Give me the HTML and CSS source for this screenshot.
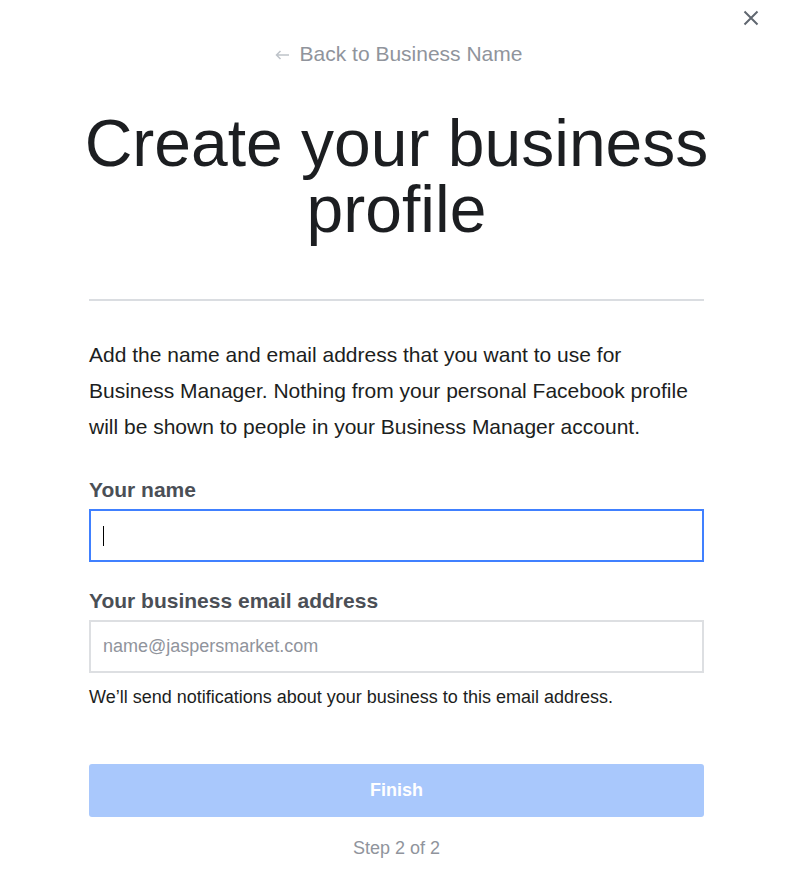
FILE: index.html
```html
<!DOCTYPE html>
<html lang="en">
<head>
  <meta charset="UTF-8">
  <meta name="viewport" content="width=device-width, initial-scale=1.0">
  <title>Create your business profile</title>
  <link rel="stylesheet" href="styles.css">
</head>
<body>
  <button class="close" aria-label="Close">
    <svg width="16" height="16" viewBox="0 0 16 16"><path d="M1.5 1.5 L14.5 14.5 M14.5 1.5 L1.5 14.5" stroke="#606770" stroke-width="2" fill="none"/></svg>
  </button>
  <div class="container">
    <a class="back" href="#">
      <svg class="arrow" width="14" height="10" viewBox="0 0 14 10"><path d="M14 5 H1.5 M5.5 1 L1.5 5 L5.5 9" stroke="#bec3c9" stroke-width="1.5" fill="none"/></svg>
      Back to Business Name
    </a>
    <h1 class="title">Create your business profile</h1>
    <hr class="divider">
    <p class="intro">
      Add the name and email address that you want to use for Business Manager. Nothing from your personal Facebook profile will be shown to people in your Business Manager account.
    </p>
    <label class="label" for="yourName">Your name</label>
    <div class="field focused">
      <span class="caret"></span>
      <input type="text" id="yourName">
    </div>
    <label class="label second" for="email">Your business email address</label>
    <div class="field">
      <input type="email" id="email" placeholder="name@jaspersmarket.com">
    </div>
    <p class="hint">We’ll send notifications about your business to this email address.</p>
    <button class="finish" disabled>Finish</button>
    <p class="step">Step 2 of 2</p>
  </div>
</body>
</html>
```

FILE: styles.css
```css
body {
  margin: 0;
  background: #fff;
  font-family: "Liberation Sans", Arial, sans-serif;
  color: #1c1e21;
}
.close {
  position: absolute;
  top: 10px;
  right: 35px;
  padding: 0;
  border: 0;
  background: none;
  width: 16px;
  height: 16px;
  cursor: pointer;
}
.close svg {
  display: block;
}
.container {
  width: 615px;
  margin: 0 90px 0 89px;
  padding-top: 42px;
  display: flex;
  flex-direction: column;
}
.back {
  align-self: center;
  margin-left: 4px;
  display: flex;
  align-items: center;
  gap: 11px;
  font-size: 21px;
  line-height: 24px;
  color: #90949c;
  text-decoration: none;
}
.back .arrow {
  display: block;
  margin-top: 2px;
}
.title {
  margin: 44px -20px 0;
  font-size: 66px;
  line-height: 66px;
  font-weight: normal;
  text-align: center;
  color: #1c1e21;
}
.divider {
  margin: 57px 0 0;
  border: 0;
  height: 2px;
  background: #dadde1;
}
.intro {
  margin: 36px 0 0;
  font-size: 21px;
  line-height: 36px;
}
.label {
  margin-top: 33px;
  font-size: 21px;
  line-height: 24px;
  font-weight: bold;
  color: #4b4f56;
}
.label.second {
  margin-top: 27px;
}
.field {
  margin-top: 7px;
  height: 53px;
  box-sizing: border-box;
  border: 2px solid #dddfe2;
  padding: 0 12px;
  display: flex;
  align-items: center;
}
.field.focused {
  border-color: #4080ff;
}
.field input {
  flex: 1;
  border: 0;
  outline: none;
  padding: 0;
  font-family: inherit;
  font-size: 18px;
  color: #1c1e21;
  background: transparent;
}
.field input::placeholder {
  color: #90949c;
}
.caret {
  width: 1px;
  height: 20px;
  background: #000;
}
.hint {
  margin: 12px 0 0;
  font-size: 18px;
  line-height: 24px;
}
.finish {
  margin-top: 55px;
  height: 53px;
  border: 0;
  border-radius: 3px;
  background: #a9c8fc;
  color: #fff;
  font-family: inherit;
  font-size: 18px;
  font-weight: bold;
}
.step {
  margin: 19px 0 0;
  font-size: 18px;
  line-height: 24px;
  text-align: center;
  color: #90949c;
}
```
